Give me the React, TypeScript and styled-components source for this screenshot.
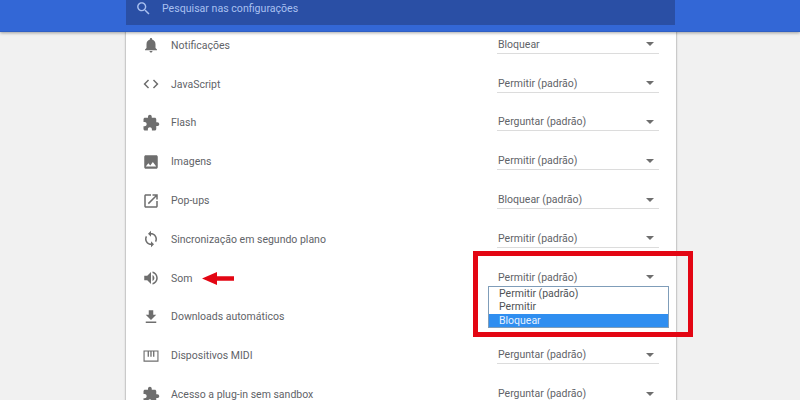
import styled, { createGlobalStyle } from "styled-components";

const paths = {
  bell: "M12 22c1.1 0 2-.9 2-2h-4c0 1.1.9 2 2 2zm6-6v-5c0-3.07-1.63-5.64-4.5-6.32V4c0-.83-.67-1.5-1.5-1.5s-1.5.67-1.5 1.5v.68C7.64 5.36 6 7.92 6 11v5l-2 2v1h16v-1l-2-2z",
  code: "M9.4 16.6L4.8 12l4.6-4.6L8 6l-6 6 6 6 1.4-1.4zm5.2 0l4.6-4.6-4.6-4.6L16 6l6 6-6 6-1.4-1.4z",
  puzzle: "M20.5 11H19V7c0-1.1-.9-2-2-2h-4V3.5C13 2.12 11.88 1 10.5 1S8 2.12 8 3.5V5H4c-1.1 0-1.99.9-1.99 2v3.8H3.5c1.49 0 2.7 1.21 2.7 2.7s-1.21 2.7-2.7 2.7H2V20c0 1.1.9 2 2 2h3.8v-1.5c0-1.49 1.21-2.7 2.7-2.7 1.49 0 2.7 1.21 2.7 2.7V22H17c1.1 0 2-.9 2-2v-4h1.5c1.38 0 2.5-1.12 2.5-2.5S21.88 11 20.5 11z",
  photo: "M21 19V5c0-1.1-.9-2-2-2H5c-1.1 0-2 .9-2 2v14c0 1.1.9 2 2 2h14c1.1 0 2-.9 2-2zM8.5 13.5l2.5 3.01L14.5 12l4.5 6H5l3.5-4.5z",
  open: "M19 19H5V5h7V3H5c-1.11 0-2 .9-2 2v14c0 1.1.89 2 2 2h14c1.1 0 2-.9 2-2v-7h-2v7zM14 3v2h3.59l-9.83 9.83 1.41 1.41L19 6.41V10h2V3h-7z",
  sync: "M12 4V1L8 5l4 4V6c3.31 0 6 2.69 6 6 0 1.01-.25 1.97-.7 2.8l1.46 1.46C19.54 15.03 20 13.57 20 12c0-4.42-3.58-8-8-8zm0 14c-3.31 0-6-2.69-6-6 0-1.01.25-1.97.7-2.8L5.24 7.74C4.46 8.97 4 10.43 4 12c0 4.42 3.58 8 8 8v3l4-4-4-4v3z",
  volume: "M3 9v6h4l5 5V4L7 9H3zm13.5 3c0-1.77-1.02-3.29-2.5-4.03v8.05c1.48-.73 2.5-2.25 2.5-4.02zM14 3.23v2.06c2.89.86 5 3.54 5 6.71s-2.11 5.85-5 6.71v2.06c4.01-.91 7-4.49 7-8.77s-2.99-7.86-7-8.77z",
  download: "M19 9h-4V3H9v6H5l7 7 7-7zM5 18v2h14v-2H5z",
  midi: "M2 4.5h20v15H2zM3.5 6v12h17V6zM7.5 6h1.75v7H7.5zM11.1 6h1.75v7H11.1zM14.75 6h1.75v7h-1.75z",
  search: "M15.5 14h-.79l-.28-.27C15.41 12.59 16 11.11 16 9.5 16 5.91 13.09 3 9.5 3S3 5.91 3 9.5 5.91 16 9.5 16c1.61 0 3.09-.59 4.23-1.57l.27.28v.79l5 4.99L20.49 19l-4.99-5zm-6 0C7.01 14 5 11.99 5 9.5S7.01 5 9.5 5 14 7.01 14 9.5 11.99 14 9.5 14z",
};

type IconName = keyof typeof paths;

// value is empty where the open dropdown covers it
const settings: { icon: IconName; label: string; value: string; open?: boolean }[] = [
  { icon: "bell", label: "Notificações", value: "Bloquear" },
  { icon: "code", label: "JavaScript", value: "Permitir (padrão)" },
  { icon: "puzzle", label: "Flash", value: "Perguntar (padrão)" },
  { icon: "photo", label: "Imagens", value: "Permitir (padrão)" },
  { icon: "open", label: "Pop-ups", value: "Bloquear (padrão)" },
  { icon: "sync", label: "Sincronização em segundo plano", value: "Permitir (padrão)" },
  { icon: "volume", label: "Som", value: "Permitir (padrão)", open: true },
  { icon: "download", label: "Downloads automáticos", value: "" },
  { icon: "midi", label: "Dispositivos MIDI", value: "Perguntar (padrão)" },
  { icon: "puzzle", label: "Acesso a plug-in sem sandbox", value: "Perguntar (padrão)" },
];

const options = ["Permitir (padrão)", "Permitir", "Bloquear"];

const Icon = ({ name, size = 18 }: { name: IconName; size?: number }) => (
  <svg width={size} height={size} viewBox="0 0 24 24" fill="currentColor">
    <path fillRule={name === "midi" ? "evenodd" : undefined} d={paths[name]} />
  </svg>
);

const RedArrow = () => (
  <svg width="32" height="13" viewBox="0 0 32 13">
    <path d="M0 6.5L15 0v4.2h17v4.6H15V13z" fill="#e30613" />
  </svg>
);

export default function App() {
  return (
    <>
      <GlobalStyle />
      <Page>
        <Header>
          <SearchBox>
            <SearchIcon>
              <Icon name="search" size={17} />
            </SearchIcon>
            <SearchText>Pesquisar nas configurações</SearchText>
          </SearchBox>
        </Header>
        <Card>
          {settings.map((item) => (
            <Row key={item.label + item.icon}>
              <RowIcon>
                <Icon name={item.icon} />
              </RowIcon>
              <Label>
                {item.label}
                {item.open && <RedArrow />}
              </Label>
              <SelectField>
                <span>{item.value}</span>
                <Caret />
                {item.open && (
                  <>
                    <Highlight />
                    <Dropdown>
                      {options.map((option) => (
                        <DropdownOption key={option} $selected={option === "Bloquear"}>
                          {option}
                        </DropdownOption>
                      ))}
                    </Dropdown>
                  </>
                )}
              </SelectField>
            </Row>
          ))}
        </Card>
      </Page>
    </>
  );
}

const GlobalStyle = createGlobalStyle`
  html, body {
    margin: 0;
    height: 100%;
    overflow: hidden;
    background: #f1f1f1;
  }
`;

const Page = styled.div`
  width: 800px;
  height: 400px;
  overflow: hidden;
  font-family: Roboto, "Liberation Sans", sans-serif;
  font-size: 10.5px;
  color: #5f6368;
`;

const Header = styled.header`
  position: relative;
  z-index: 2;
  height: 31px;
  padding-left: 126px;
  background: #3367d6;
  border-bottom: 1px solid #2f5fc4;
  box-shadow: 0 1px 3px rgba(0, 0, 0, 0.35);
`;

const SearchBox = styled.div`
  width: 549px;
  height: 25px;
  background: #2a4fa5;
  display: flex;
  align-items: center;
  box-sizing: border-box;
  padding: 0 0 9px 9px;
  gap: 10px;
`;

const SearchIcon = styled.span`
  display: flex;
  color: #a9c0f0;
`;

const SearchText = styled.span`
  font-size: 10.6px;
  color: #a9c0f0;
`;

const Card = styled.main`
  width: 550px;
  margin: -6px 0 0 126px;
  background: #fff;
  box-shadow: 0 0 2px rgba(0, 0, 0, 0.5);
`;

const Row = styled.div`
  height: 38.8px;
  display: grid;
  grid-template-columns: 20px 1fr 162px;
  column-gap: 10px;
  align-items: center;
  padding: 0 17px 0 15px;
`;

const RowIcon = styled.span`
  display: flex;
  justify-content: center;
  color: #6e6e6e;
`;

const Label = styled.span`
  display: flex;
  align-items: center;
  gap: 10px;
`;

const SelectField = styled.div`
  position: relative;
  height: 100%;
  box-sizing: border-box;
  display: flex;
  align-items: center;
  justify-content: space-between;
  padding: 0 5px 2px 1px;
  &::after {
    content: "";
    position: absolute;
    left: 0;
    right: 0;
    bottom: 11px;
    height: 1px;
    background: #dcdcdc;
  }
`;

const Caret = styled.span`
  width: 0;
  height: 0;
  border-left: 4.5px solid transparent;
  border-right: 4.5px solid transparent;
  border-top: 4.5px solid #6e6e6e;
`;

const Dropdown = styled.ul`
  position: absolute;
  z-index: 1;
  left: -9px;
  top: 27px;
  width: 181px;
  margin: 0;
  padding: 0;
  list-style: none;
  background: #fff;
  border: 1px solid #7f9db9;
  box-sizing: border-box;
`;

const DropdownOption = styled.li<{ $selected: boolean }>`
  height: 13.4px;
  line-height: 13px;
  padding-left: 10px;
  color: ${(p) => (p.$selected ? "#e6f1ff" : "#4f5356")};
  background: ${(p) => (p.$selected ? "#2f8ef0" : "transparent")};
`;

const Highlight = styled.div`
  position: absolute;
  z-index: 2;
  left: -24px;
  top: -8px;
  width: 220px;
  height: 86px;
  box-sizing: border-box;
  border: 5px solid #e30613;
  pointer-events: none;
`;
